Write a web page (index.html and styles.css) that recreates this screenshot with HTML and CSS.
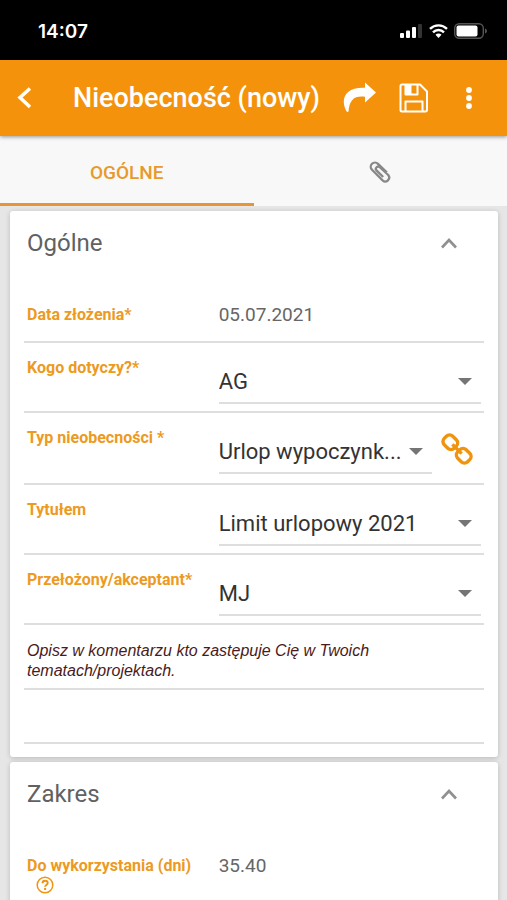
FILE: index.html
```html
<!DOCTYPE html>
<html lang="pl">
<head>
<meta charset="utf-8">
<meta name="viewport" content="width=device-width, initial-scale=1">
<title>Nieobecność (nowy)</title>
<link rel="stylesheet" href="styles.css">
</head>
<body>
<div class="status">
  <span class="clock">14:07</span>
  <svg class="status-icons" width="88" height="18" viewBox="0 0 88 18" aria-hidden="true">
    <g fill="#fff">
      <rect x="1" y="11" width="4" height="5" rx="1"/>
      <rect x="7" y="8.500" width="4" height="7.500" rx="1"/>
      <rect x="13" y="5" width="4" height="11" rx="1"/>
      <rect x="19" y="2" width="4" height="14" rx="1" fill="#333"/>
      <path d="M39.500 16l-3-3.200a4.200 4.200 0 0 1 6 0z"/>
    </g>
    <g fill="none" stroke="#fff" stroke-width="2.400">
      <path d="M31 6.800a12.200 12.200 0 0 1 17 0"/>
      <path d="M34 10.300a7.800 7.800 0 0 1 11 0"/>
    </g>
    <rect x="55.700" y="1.700" width="28.600" height="14.600" rx="4.500" fill="none" stroke="#555" stroke-width="1.400"/>
    <rect x="57.500" y="3.500" width="21" height="11" rx="2" fill="#fff"/>
    <path d="M86 6.500q2 .6 2 2.500t-2 2.500z" fill="#555"/>
  </svg>
</div>

<header class="bar">
  <button class="icon-btn back" aria-label="Wstecz">
    <svg width="16" height="24" viewBox="0 0 16 24"><path d="M14 2.500 4 11.500l10 9.500" fill="none" stroke="#fff" stroke-width="3.600"/></svg>
  </button>
  <h1 class="title">Nieobecność (nowy)</h1>
  <button class="icon-btn" aria-label="Udostępnij">
    <svg width="34" height="32" viewBox="0 0 34 32"><path d="M22 .500 33 10.500 22 20.500V14.800C12 13.500 6.500 17 5.500 29.500L4 30C-3.500 17.500 2 4.800 22 5.800z" fill="#fff"/></svg>
  </button>
  <button class="icon-btn" aria-label="Zapisz">
    <svg width="30" height="30" viewBox="0 0 30 30"><g fill="none" stroke="#fff" stroke-width="2" stroke-linejoin="round"><path d="M3 1.500h18l7 7V27a1.500 1.500 0 0 1-1.500 1.500H3A1.500 1.500 0 0 1 1.500 27V3A1.500 1.500 0 0 1 3 1.500z"/><path d="M6.500 28V18.500h17V28M6.500 2v9.500h12V2"/></g><path d="M7 2h5.500v9H7z" fill="#fff"/></svg>
  </button>
  <button class="icon-btn more" aria-label="Więcej">
    <svg width="8" height="24" viewBox="0 0 8 24" fill="#fff"><circle cx="4" cy="4" r="2.900"/><circle cx="4" cy="12" r="2.900"/><circle cx="4" cy="20" r="2.900"/></svg>
  </button>
</header>

<nav class="tabs">
  <a class="tab active" href="#ogolne">OGÓLNE</a>
  <a class="tab" href="#zalaczniki" aria-label="Załączniki">
    <svg width="22" height="24" viewBox="0 0 22 24"><path d="M18 12.500 9 3.800A4.200 4.200 0 0 0 3 9.800L13.600 20.400A3.900 3.900 0 0 0 19.200 15L10.800 7.200A2.300 2.300 0 0 0 7.500 10.400L14.200 17" fill="none" stroke="#888" stroke-width="2.300"/></svg>
  </a>
</nav>

<main class="content">
  <section class="card" id="ogolne">
    <div class="card-head">
      <h2 class="card-title">Ogólne</h2>
      <button class="icon-btn" aria-label="Zwiń Ogólne"><svg width="18" height="14" viewBox="0 0 18 14"><path d="M2 11.500l7-7.500 7 7.500" fill="none" stroke="#909090" stroke-width="2.600"/></svg></button>
    </div>
    <div class="row plain">
      <span class="label">Data złożenia*</span>
      <span class="value">05.07.2021</span>
    </div>
    <div class="row">
      <label class="label" for="kogo">Kogo dotyczy?*</label>
      <div class="field"><select id="kogo"><option>AG</option></select><i class="caret"></i></div>
    </div>
    <div class="row linked">
      <label class="label" for="typ">Typ nieobecności *</label>
      <div class="field"><select id="typ"><option>Urlop wypoczynk...</option></select><i class="caret"></i></div>
      <button class="icon-btn link" aria-label="Powiązania">
        <svg width="32" height="32" viewBox="0 0 32 32"><g transform="rotate(45 16 16)" fill="none" stroke="#f0930f" stroke-width="3.400"><rect x="-.5" y="10" width="14" height="12" rx="4.500"/><rect x="18.500" y="10" width="14" height="12" rx="4.500"/><path d="M9.500 16h13"/></g></svg>
      </button>
    </div>
    <div class="row">
      <label class="label" for="tytulem">Tytułem</label>
      <div class="field"><select id="tytulem"><option>Limit urlopowy 2021</option></select><i class="caret"></i></div>
    </div>
    <div class="row">
      <label class="label" for="przelozony">Przełożony/akceptant*</label>
      <div class="field"><select id="przelozony"><option>MJ</option></select><i class="caret"></i></div>
    </div>
    <p class="note">Opisz w komentarzu kto zastępuje Cię w Twoich tematach/projektach.</p>
    <div class="blank"></div>
  </section>

  <section class="card" id="zakres">
    <div class="card-head">
      <h2 class="card-title">Zakres</h2>
      <button class="icon-btn" aria-label="Zwiń Zakres"><svg width="18" height="14" viewBox="0 0 18 14"><path d="M2 11.500l7-7.500 7 7.500" fill="none" stroke="#909090" stroke-width="2.600"/></svg></button>
    </div>
    <div class="row plain">
      <span class="label">Do wykorzystania (dni)
        <button class="icon-btn help" aria-label="Pomoc"><svg width="18" height="18" viewBox="0 0 18 18" fill="none" stroke="#f0930f"><circle cx="9" cy="9" r="7.800" stroke-width="1.500"/><path d="M6.500 7.200c0-3.400 5.200-3.200 5.200-.2 0 1.900-2.600 1.900-2.600 3.700" stroke-width="1.900"/><path d="M9.100 12v2" stroke-width="2"/></svg></button>
      </span>
      <span class="value">35.40</span>
    </div>
  </section>
</main>
</body>
</html>
```
FILE: styles.css
```css
* { box-sizing: border-box; }

html { height: 100%; overflow: hidden; }

body {
  margin: 0;
  height: 100%;
  overflow: hidden;
  background: #e6e6e6;
  color: #333;
  font-family: Roboto, "Liberation Sans", sans-serif;
}

h1, h2, p { margin: 0; font-weight: 400; }

.icon-btn {
  display: flex;
  padding: 0;
  border: 0;
  background: none;
  cursor: pointer;
}

.status {
  display: flex;
  align-items: center;
  justify-content: space-between;
  height: 60px;
  padding: 2px 20px 0 38px;
  background: #000;
}

.clock {
  padding-top: 1px;
  color: #fff;
  font: 600 19px/24px Inter, sans-serif;
}

.bar {
  position: relative;
  display: flex;
  align-items: center;
  height: 76px;
  padding: 0 34px 0 16px;
  gap: 22px;
  background: #f4930b;
  box-shadow: 0 1px 4px rgba(0, 0, 0, .4);
}

.title {
  flex: 1;
  margin-left: 19px;
  color: #fff;
  font-size: 27px;
  font-weight: 500;
  line-height: 32px;
  white-space: nowrap;
}

.more { margin-left: 14px; }

.tabs {
  display: grid;
  grid-template-columns: 1fr 1fr;
  height: 70px;
  background: #f8f8f8;
}

.tab {
  display: flex;
  align-items: center;
  justify-content: center;
  padding-top: 5px;
  border-bottom: 3px solid transparent;
  color: #e79a2c;
  font-size: 19px;
  font-weight: 500;
  text-decoration: none;
}

.tab.active { border-color: #e8953a; }

.content {
  display: grid;
  gap: 5px;
  padding: 5px 9px 0 10px;
}

.card {
  padding: 0 14px 13px;
  border-radius: 3px;
  background: #fff;
  box-shadow: 0 1px 5px rgba(0, 0, 0, .2);
}

.card-head {
  display: flex;
  align-items: center;
  justify-content: space-between;
  height: 64px;
  padding: 0 26px 0 3px;
}

.card-title {
  color: #616161;
  font-size: 24px;
  line-height: 32px;
}

.row {
  display: flex;
  min-height: 70px;
  padding: 15px 3px 7px;
  border-bottom: 2px solid #dedede;
}

.row.linked { padding-bottom: 9px; }

.row.plain {
  min-height: 68px;
  padding-top: 30px;
}

.label {
  flex: 0 0 42%;
  color: #ec9a22;
  font-size: 16px;
  font-weight: 700;
  line-height: 20px;
}

.value {
  padding-left: 1px;
  color: #666;
  font-size: 19px;
  line-height: 20px;
}

.field {
  position: relative;
  flex: 1;
  height: 46px;
  margin-left: 1px;
  border-bottom: 2px solid #dedede;
}

.field select {
  width: 100%;
  height: 44px;
  padding: 4px 30px 0 0;
  border: 0;
  outline: 0;
  appearance: none;
  background: none;
  color: #333;
  font: 400 22px/28px Roboto, "Liberation Sans", sans-serif;
}

.caret {
  position: absolute;
  top: 20px;
  right: 9px;
  border: 7px solid transparent;
  border-top-color: #757575;
  border-bottom: 0;
  pointer-events: none;
}

.link {
  align-self: flex-start;
  margin: 5px 8px 0 9px;
}

.help { margin-left: 9px; }

.note {
  padding: 16px 60px 7px 3px;
  border-bottom: 2px solid #dedede;
  color: #4a1a20;
  font: italic 16px/20px "Liberation Sans", sans-serif;
}

.blank {
  height: 54px;
  border-bottom: 2px solid #dedede;
}
```
